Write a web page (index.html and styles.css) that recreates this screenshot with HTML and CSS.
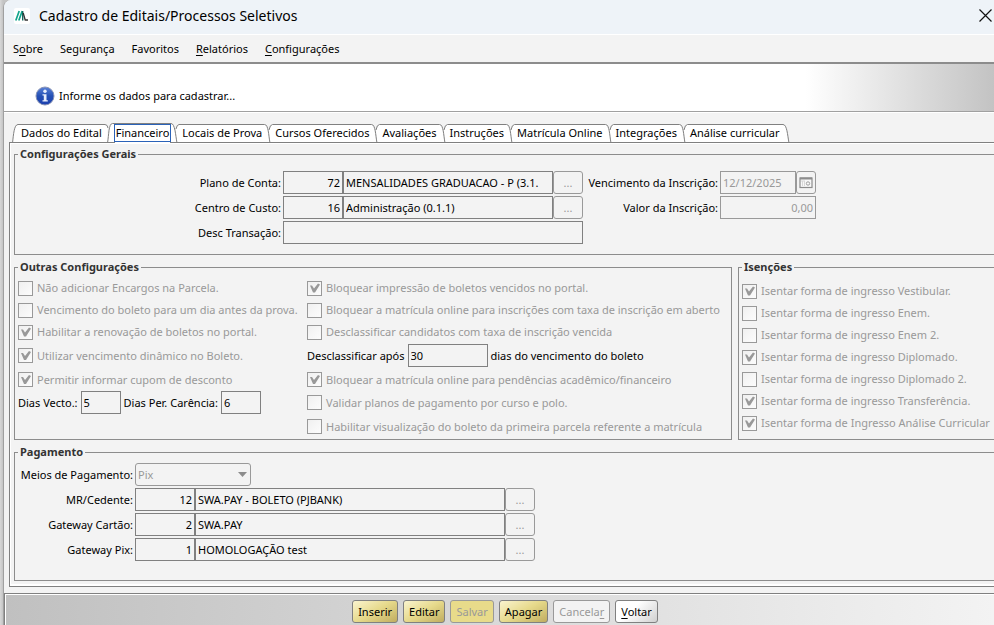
FILE: index.html
```html
<!DOCTYPE html>
<html lang="pt-BR">
<head>
    <meta charset="UTF-8">
    <meta name="viewport" content="width=device-width, initial-scale=1.0">
    <title>Cadastro de Editais/Processos Seletivos</title>
    <link rel="stylesheet" href="styles.css">
</head>
<body>
    <div class="window">
      <header class="titlebar">
        <svg class="logo" width="16" height="16" viewBox="0 0 16 16">
          <rect width="16" height="16" rx="2" fill="#fff"/>
          <path d="M1.800 12.500L5.200 3M4.800 12.500L8.200 3" stroke="#12a58c" stroke-width="1.700" fill="none"/>
          <path d="M8.700 3V12.500" stroke="#14695f" stroke-width="1.400"/>
          <path d="M9.200 5L11.200 12H14" stroke="#333" stroke-width="1.300" fill="none"/>
        </svg>
        <h1>Cadastro de Editais/Processos Seletivos</h1>
        <button type="button" class="close" aria-label="Fechar">
          <svg width="13" height="13" viewBox="0 0 13 13"><path d="M.5 .5L12.5 12.5M12.5 .5L.5 12.5" stroke="#111" stroke-width="1.2"/></svg>
        </button>
      </header>

      <nav class="menu">
        <button type="button">S<u>o</u>bre</button>
        <button type="button">Segurança</button>
        <button type="button">Favoritos</button>
        <button type="button"><u>R</u>elatórios</button>
        <button type="button"><u>C</u>onfigurações</button>
      </nav>

      <div class="info">
        <svg width="20" height="20" viewBox="0 0 20 20">
          <defs>
            <linearGradient id="blue" x1="0" y1="0" x2="0" y2="1">
              <stop offset="0" stop-color="#5b82d8"/>
              <stop offset="0.5" stop-color="#2450b4"/>
              <stop offset="1" stop-color="#1c3fae"/>
            </linearGradient>
          </defs>
          <circle cx="10" cy="10" r="9" fill="url(#blue)" stroke="#8a94b4"/>
          <circle cx="10" cy="5.2" r="1.7" fill="#e8eefc"/>
          <path d="M7.5 8.2H11.5V14.2H12.8V15.6H7.5V14.2H8.8V9.6H7.5Z" fill="#e8eefc"/>
        </svg>
        <span>Informe os dados para cadastrar...</span>
      </div>

      <div class="tabs" role="tablist">
        <svg class="edge" width="9" height="20"><path class="fill" d="M.5 20C1.5 12 2 1.5 6 1.5H9V20Z"/><path class="line" d="M.5 20C1.5 12 2 1.5 6 1.5H9"/></svg>
        <button type="button" role="tab">Dados do Edital</button>
        <svg class="edge" width="12" height="20"><path class="fill" d="M0 1.5H2Q4 1.5 4.5 5V20H0ZM4.5 20C6 12 5.5 .5 9.5 .5H12V20Z"/><path class="line" d="M0 1.5H2Q4.5 1.5 5 5M4.5 20C6 12 5.5 .5 9.5 .5H12"/></svg>
        <button type="button" role="tab" class="active" aria-selected="true"><span>Financeiro</span></button>
        <svg class="edge" width="12" height="20"><path class="fill" d="M0 .5H1C5 .5 5.5 12 7 20H0ZM6 6Q7 1.5 9 1.5H12V20H6.5Z"/><path class="line" d="M0 .5H1C5 .5 5.5 12 7 20M6 6Q7 1.5 9 1.5H12"/></svg>
        <button type="button" role="tab">Locais de Prova</button>
        <svg class="edge" width="12" height="20"><use href="#edge"/></svg>
        <button type="button" role="tab">Cursos Oferecidos</button>
        <svg class="edge" width="12" height="20"><use href="#edge"/></svg>
        <button type="button" role="tab">Avaliações</button>
        <svg class="edge" width="12" height="20"><use href="#edge"/></svg>
        <button type="button" role="tab">Instruções</button>
        <svg class="edge" width="12" height="20"><use href="#edge"/></svg>
        <button type="button" role="tab">Matrícula Online</button>
        <svg class="edge" width="12" height="20"><use href="#edge"/></svg>
        <button type="button" role="tab">Integrações</button>
        <svg class="edge" width="12" height="20">
          <g id="edge">
            <path class="fill" d="M0 1.5H1.5C5.5 1.5 5.5 12 7 20H0ZM6 7Q7 1.5 9.5 1.5H12V20H7Z"/>
            <path class="line" d="M0 1.5H1.5C5.5 1.5 5.5 12 7 20M6 7Q7 1.5 9.5 1.5H12"/>
          </g>
        </svg>
        <button type="button" role="tab">Análise curricular</button>
        <svg class="edge" width="9" height="20"><path class="fill" d="M0 1.5H2C6 1.5 6.5 12 8 20H0Z"/><path class="line" d="M0 1.5H2C6 1.5 6.5 12 8 20"/></svg>
      </div>

      <main class="panel">
        <fieldset class="general">
          <legend>Configurações Gerais</legend>
          <div class="form-grid">
            <label for="conta">Plano de Conta:</label>
            <div class="lookup">
              <input type="text" class="code" id="conta" value="72" readonly>
              <input type="text" class="name" aria-label="Nome da conta" value="MENSALIDADES GRADUACAO - P (3.1." readonly>
              <button type="button" disabled>...</button>
            </div>
            <label for="vencimento">Vencimento da Inscrição:</label>
            <div class="lookup">
              <input type="text" class="date" id="vencimento" value="12/12/2025" disabled>
              <button type="button" class="calendar" aria-label="Calendário" disabled>
                <svg width="14" height="12" viewBox="0 0 14 12">
                  <rect x="1" y="1" width="12" height="9.5" fill="#f8f8f8" stroke="#8c8c8c" stroke-width="1.2"/>
                  <path d="M1 1.5H13" stroke="#8c8c8c" stroke-width="2"/>
                  <path d="M2 4H6M3.5 4V9M5.5 4V9" stroke="#d8d8d8"/>
                  <circle cx="9" cy="6.5" r="1.7" fill="none" stroke="#a0a0a0"/>
                </svg>
              </button>
            </div>

            <label for="custo">Centro de Custo:</label>
            <div class="lookup">
              <input type="text" class="code" id="custo" value="16" readonly>
              <input type="text" class="name" aria-label="Nome do centro de custo" value="Administração (0.1.1)" readonly>
              <button type="button" disabled>...</button>
            </div>
            <label for="valor">Valor da Inscrição:</label>
            <input type="text" class="amount" id="valor" value="0,00" disabled>

            <label for="desc">Desc Transação:</label>
            <input type="text" id="desc" readonly>
          </div>
        </fieldset>

        <div class="columns">
          <fieldset class="others">
            <legend>Outras Configurações</legend>
            <div class="options">
              <label class="check"><input type="checkbox" disabled>Não adicionar Encargos na Parcela.</label>
              <label class="check"><input type="checkbox" checked disabled>Bloquear impressão de boletos vencidos no portal.</label>

              <label class="check"><input type="checkbox" disabled>Vencimento do boleto para um dia antes da prova.</label>
              <label class="check"><input type="checkbox" disabled>Bloquear a matrícula online para inscrições com taxa de inscrição em aberto</label>

              <label class="check"><input type="checkbox" checked disabled>Habilitar a renovação de boletos no portal.</label>
              <label class="check"><input type="checkbox" disabled>Desclassificar candidatos com taxa de inscrição vencida</label>

              <label class="check"><input type="checkbox" checked disabled>Utilizar vencimento dinâmico no Boleto.</label>
              <div class="inline">
                <label for="apos">Desclassificar após</label>
                <input type="text" class="medium" id="apos" value="30" readonly>
                <span>dias do vencimento do boleto</span>
              </div>

              <label class="check"><input type="checkbox" checked disabled>Permitir informar cupom de desconto</label>
              <label class="check"><input type="checkbox" checked disabled>Bloquear a matrícula online para pendências acadêmico/financeiro</label>

              <div class="inline">
                <label for="vecto">Dias Vecto.:</label>
                <input type="text" class="small" id="vecto" value="5" readonly>
                <label for="carencia">Dias Per. Carência:</label>
                <input type="text" class="small" id="carencia" value="6" readonly>
              </div>
              <label class="check"><input type="checkbox" disabled>Validar planos de pagamento por curso e polo.</label>

              <span></span>
              <label class="check"><input type="checkbox" disabled>Habilitar visualização do boleto da primeira parcela referente a matrícula</label>
            </div>
          </fieldset>

          <fieldset class="exemptions">
            <legend>Isenções</legend>
            <div class="list">
              <label class="check"><input type="checkbox" checked disabled>Isentar forma de ingresso Vestibular.</label>
              <label class="check"><input type="checkbox" disabled>Isentar forma de ingresso Enem.</label>
              <label class="check"><input type="checkbox" disabled>Isentar forma de ingresso Enem 2.</label>
              <label class="check"><input type="checkbox" checked disabled>Isentar forma de ingresso Diplomado.</label>
              <label class="check"><input type="checkbox" disabled>Isentar forma de ingresso Diplomado 2.</label>
              <label class="check"><input type="checkbox" checked disabled>Isentar forma de ingresso Transferência.</label>
              <label class="check"><input type="checkbox" checked disabled>Isentar forma de Ingresso Análise Curricular</label>
            </div>
          </fieldset>
        </div>

        <fieldset class="payment">
          <legend>Pagamento</legend>
          <div class="form-grid">
            <label for="meios">Meios de Pagamento:</label>
            <div class="select">
              <select id="meios" disabled><option>Pix</option></select>
              <svg width="9" height="5"><path d="M0 0H9L4.5 5Z" fill="#8c8c8c"/></svg>
            </div>

            <label for="cedente">MR/Cedente:</label>
            <div class="lookup">
              <input type="text" class="code" id="cedente" value="12" readonly>
              <input type="text" class="name" aria-label="Nome do cedente" value="SWA.PAY - BOLETO (PJBANK)" readonly>
              <button type="button" disabled>...</button>
            </div>

            <label for="cartao">Gateway Cartão:</label>
            <div class="lookup">
              <input type="text" class="code" id="cartao" value="2" readonly>
              <input type="text" class="name" aria-label="Nome do gateway de cartão" value="SWA.PAY" readonly>
              <button type="button" disabled>...</button>
            </div>

            <label for="pix">Gateway Pix:</label>
            <div class="lookup">
              <input type="text" class="code" id="pix" value="1" readonly>
              <input type="text" class="name" aria-label="Nome do gateway Pix" value="HOMOLOGAÇÃO test" readonly>
              <button type="button" disabled>...</button>
            </div>
          </div>
        </fieldset>
      </main>

      <footer class="actions">
        <button type="button" class="gold">Inserir</button>
        <button type="button" class="gold">Editar</button>
        <button type="button" class="gold" disabled>Salvar</button>
        <button type="button" class="gold">Apagar</button>
        <button type="button" disabled>Cancela<u>r</u></button>
        <button type="button"><u>V</u>oltar</button>
      </footer>
    </div>
</body>
</html>
```

FILE: styles.css
```css
* {
  box-sizing: border-box;
}

body {
  margin: 0;
  min-height: 100vh;
  padding-left: 3px;
  display: flex;
  background: linear-gradient(to right, #d8d8d8, #c4c4c4 3px);
  font-family: "Noto Sans", "Open Sans", sans-serif;
  font-size: 11px;
  line-height: 16px;
  color: #000;
}

button,
input,
select {
  font: inherit;
  color: inherit;
  margin: 0;
}

u {
  text-underline-offset: 2px;
}

.window {
  flex: 1;
  min-width: 0;
  display: flex;
  flex-direction: column;
  border-left: 1px solid #a0a0a0;
  border-top-left-radius: 8px;
  background: #f3f3f3;
  overflow: hidden;
}

/* title and menu */

.titlebar {
  display: flex;
  align-items: center;
  height: 35px;
  padding: 0 2px 3px 10px;
  border-bottom: 1px solid #fff;
  background: #eef3f8;
}

.titlebar h1 {
  flex: 1;
  margin: 0 0 0 9px;
  font-size: 14px;
  font-weight: 400;
  line-height: 20px;
}

.close {
  display: flex;
  padding: 0;
  border: none;
  background: none;
}

.menu {
  display: flex;
  align-items: center;
  gap: 1px;
  height: 29px;
  padding-left: 1px;
  border-bottom: 2px solid #8c8c8c;
}

.menu button {
  padding: 0 8px;
  border: none;
  background: none;
}

.info {
  display: flex;
  align-items: center;
  gap: 4px;
  height: 48px;
  padding: 16px 0 0 31px;
  border-bottom: 1px solid #a0a0a0;
  background: linear-gradient(to right, #fff 81%, #c3c3c3);
}

/* tabs */

.tabs {
  display: flex;
  height: 30px;
  padding: 10px 0 0 8px;
  border-top: 1px solid #fff;
}

.tabs button {
  height: 19px;
  margin-top: 1px;
  padding: 0 1px 2px 0;
  border: none;
  border-top: 1px solid #808080;
  background: #fff;
}

.tabs .active {
  position: relative;
  height: 21px;
  margin-top: 0;
  padding: 0 1px 3px;
}

.active span {
  display: block;
  margin: 0 -2px;
  padding: 0 1px;
  border: 1px solid #2a62b8;
}

.edge {
  flex: none;
  display: block;
}

.edge .fill {
  fill: #fff;
}

.edge .line {
  fill: none;
  stroke: #808080;
}

/* panel and groups */

.panel {
  margin-left: 5px;
  padding: 3px 0 5px 4px;
  border: 1px solid #808080;
  border-right: none;
  box-shadow: inset 1px 1px 0 #fff, inset 0 -2px 0 #fff;
}

fieldset {
  min-width: 0;
  margin: 0;
  padding: 0;
  border: 1px solid #8c8c8c;
  border-right: none;
}

legend {
  margin-left: 3px;
  padding: 0 2px;
  font-weight: 700;
  color: #333;
}

.columns {
  display: flex;
  gap: 6px;
  margin: 4px 0;
}

.others {
  width: 718px;
  border-right: 1px solid #8c8c8c;
}

.exemptions {
  flex: 1;
}

.list {
  padding: 5px 0 0 3px;
}

.list .check {
  height: 22px;
}

.options {
  display: grid;
  grid-template-columns: 289px 1fr;
  grid-template-rows: 22px 22px 22px 25px 23px 23px 25px;
  align-items: center;
  padding: 2px 0 0 3px;
}

.form-grid {
  display: grid;
  gap: 2px;
  align-items: center;
}

.form-grid label {
  text-align: right;
}

.general {
  padding: 9px 0 10px;
}

.general .form-grid {
  grid-template-columns: 266px 300px 133px 96px;
}

.payment {
  padding: 3px 0 19px;
}

.payment .form-grid {
  grid-template-columns: 118px 400px;
}

/* fields */

input[type="text"] {
  width: 100%;
  height: 23px;
  padding: 0 2px;
  border: 1px solid #808080;
  border-radius: 0;
  background: #f3f3f3;
}

input[type="text"]:disabled {
  border-color: #999;
  color: #999;
}

.lookup {
  display: flex;
}

.lookup .code {
  flex: none;
  width: 60px;
  text-align: right;
}

.lookup .name,
.lookup .date {
  flex: 1;
  min-width: 0;
}

.amount {
  text-align: right;
}

.lookup button {
  flex: none;
  width: 30px;
  height: 23px;
  padding: 0;
  border: 1px solid #999;
  border-radius: 3px;
  background: #f3f3f3;
  color: #999;
}

.lookup .calendar {
  display: flex;
  align-items: center;
  justify-content: center;
  width: 20px;
}

.inline {
  display: flex;
  align-items: center;
  gap: 3px;
}

.inline .small {
  width: 40px;
}

.inline .medium {
  width: 80px;
}

.select {
  position: relative;
  width: 116px;
  height: 23px;
}

.select select {
  appearance: none;
  width: 100%;
  height: 100%;
  padding: 0 2px;
  border: 1px solid #999;
  border-radius: 3px;
  background: #f3f3f3;
  color: #999;
  opacity: 1;
}

.select svg {
  position: absolute;
  top: 9px;
  right: 4px;
  pointer-events: none;
}

.check {
  display: flex;
  align-items: center;
  gap: 4px;
  color: #999;
  white-space: nowrap;
}

.check input {
  appearance: none;
  flex: none;
  width: 15px;
  height: 15px;
  border: 1px solid #999;
  background: linear-gradient(135deg, #f0f0f0, #fcfcfc);
}

.check input:checked::before {
  content: "";
  display: block;
  width: 13px;
  height: 13px;
  background: #999;
  clip-path: polygon(2px 4px, 4px 4px, 6px 7px, 10px 2px, 12px 3px, 7px 11px, 5px 11px);
}

/* bottom buttons */

.actions {
  flex: 1;
  display: flex;
  align-items: flex-start;
  justify-content: center;
  gap: 5px;
  margin-top: 6px;
  padding: 6px 0 2px 11px;
  border-top: 1px solid #808080;
  border-left: 1px solid #808080;
  box-shadow: inset 1px 1px 0 #fff;
  background: linear-gradient(to right, #c0c0c0, #f3f3f3);
}

.actions button {
  height: 23px;
  padding: 0 5px;
  border: 1px solid #808080;
  border-radius: 3px;
  background: linear-gradient(135deg, #fff 40%, #d0d0d0);
}

.actions button:disabled {
  border-color: #999;
  background: #f3f3f3;
  color: #999;
}

.actions .gold {
  background: linear-gradient(150deg, #faf4cf, #e6d98a 50%, #c0ad60);
}

.actions .gold:disabled {
  background: #e8db8a;
}
```
